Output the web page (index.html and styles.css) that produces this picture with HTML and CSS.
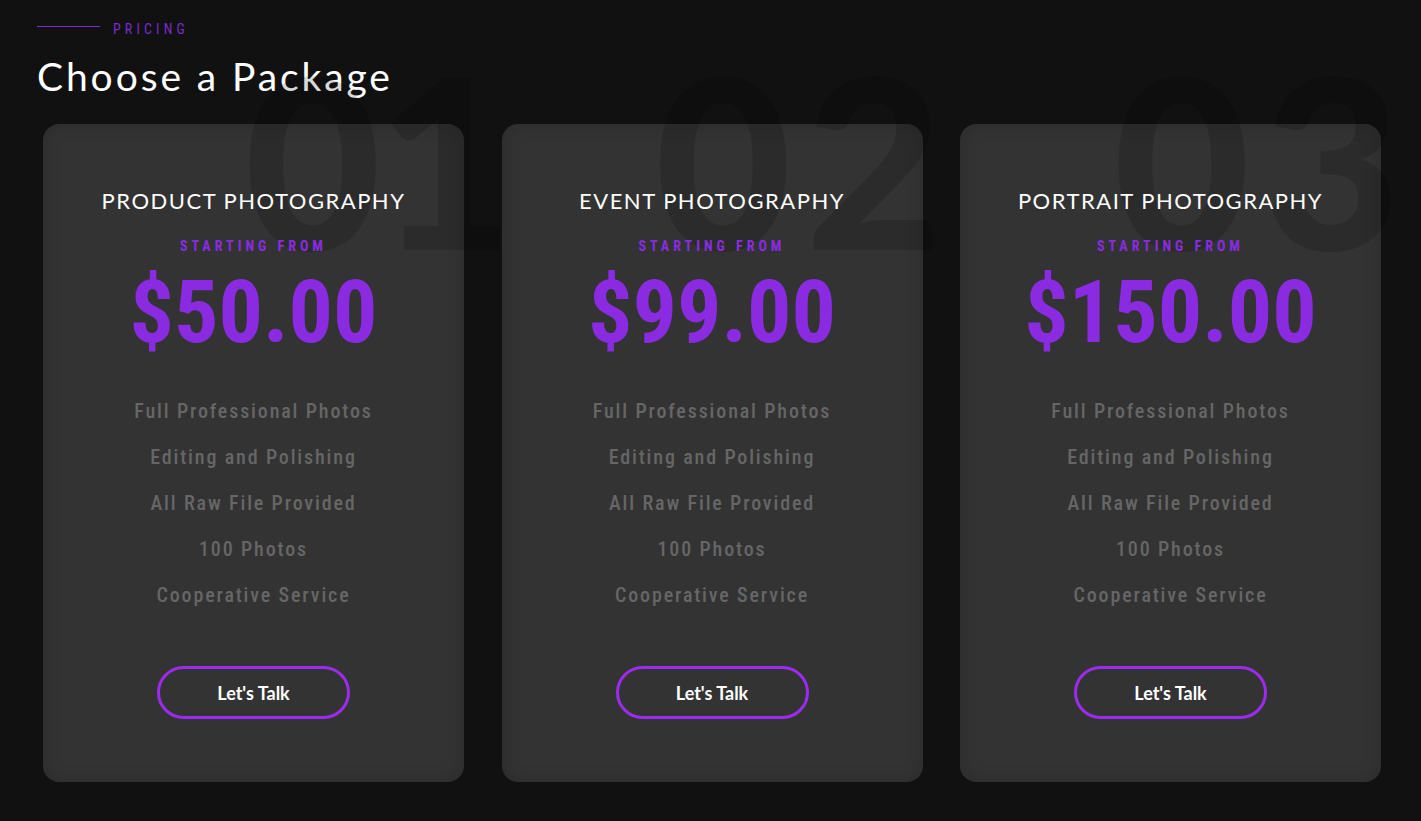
FILE: index.html
```html
<!DOCTYPE html>
<html lang="en">
<head>
<meta charset="utf-8">
<title>Pricing</title>
<link rel="stylesheet" href="styles.css">
</head>
<body>
<section class="pricing">
  <div class="eyebrow">
    <span class="eyebrow-line"></span>
    <span class="eyebrow-text">PRICING</span>
  </div>
  <h2 class="heading">Choose a Package</h2>

  <div class="cards">
    <article class="card">
      <span class="card-num card-num--one">01</span>
      <div class="card-body">
        <h3 class="card-title">PRODUCT PHOTOGRAPHY</h3>
        <p class="card-from">STARTING FROM</p>
        <p class="card-price">$50.00</p>
        <ul class="card-list">
          <li>Full Professional Photos</li>
          <li>Editing and Polishing</li>
          <li>All Raw File Provided</li>
          <li>100 Photos</li>
          <li>Cooperative Service</li>
        </ul>
        <a class="card-btn" href="#">Let's Talk</a>
      </div>
    </article>

    <article class="card">
      <span class="card-num">02</span>
      <div class="card-body">
        <h3 class="card-title">EVENT PHOTOGRAPHY</h3>
        <p class="card-from">STARTING FROM</p>
        <p class="card-price">$99.00</p>
        <ul class="card-list">
          <li>Full Professional Photos</li>
          <li>Editing and Polishing</li>
          <li>All Raw File Provided</li>
          <li>100 Photos</li>
          <li>Cooperative Service</li>
        </ul>
        <a class="card-btn" href="#">Let's Talk</a>
      </div>
    </article>

    <article class="card">
      <span class="card-num">03</span>
      <div class="card-body">
        <h3 class="card-title">PORTRAIT PHOTOGRAPHY</h3>
        <p class="card-from">STARTING FROM</p>
        <p class="card-price">$150.00</p>
        <ul class="card-list">
          <li>Full Professional Photos</li>
          <li>Editing and Polishing</li>
          <li>All Raw File Provided</li>
          <li>100 Photos</li>
          <li>Cooperative Service</li>
        </ul>
        <a class="card-btn" href="#">Let's Talk</a>
      </div>
    </article>
  </div>
</section>
</body>
</html>
```

FILE: styles.css
```css
* { box-sizing: border-box; }

html, body {
  margin: 0;
  padding: 0;
  background: #111111;
  height: 100%;
}

body {
  font-family: "Lato", "Open Sans", sans-serif;
  color: #fff;
  overflow: hidden;
}

.pricing {
  padding: 21px 40px 0 37px;
}

.eyebrow {
  display: flex;
  align-items: flex-start;
  gap: 13px;
  height: 16px;
}

.eyebrow-line {
  margin-top: 5px;
  width: 63px;
  height: 1px;
  background: #7f2bd8;
}

.eyebrow-text {
  font-family: "Roboto Condensed", "Liberation Sans Narrow", "Roboto", sans-serif;
  font-stretch: condensed;
  font-size: 14px;
  line-height: 16px;
  letter-spacing: 4.1px;
  color: #7b2bcf;
}

.heading {
  margin: 15px 0 0 0;
  font-family: "Lato", sans-serif;
  font-weight: 400;
  font-size: 39px;
  line-height: 48px;
  letter-spacing: 2.9px;
  color: #ffffff;
}

.cards {
  margin: 24px 0 0 6px;
  display: grid;
  grid-template-columns: repeat(3, 421px);
  column-gap: 37.5px;
}

.card {
  position: relative;
  height: 658px;
  background: #333333;
  border-radius: 16px;
  box-shadow: inset 0 0 18px rgba(0, 0, 0, 0.16);
}

.card-num {
  position: absolute;
  right: -34px;
  top: -83px;
  z-index: 1;
  font-family: "Lato", sans-serif;
  font-weight: 900;
  font-size: 236px;
  line-height: 1;
  letter-spacing: 14px;
  color: rgba(0, 0, 0, 0.15);
  pointer-events: none;
}

.card-num--one {
  right: -46px;
  letter-spacing: -4px;
}

.card-body {
  position: relative;
  z-index: 2;
  display: flex;
  flex-direction: column;
  align-items: center;
  padding-top: 62px;
  text-align: center;
}

.card-title {
  margin: 0;
  font-family: "Lato", sans-serif;
  font-weight: 400;
  font-size: 22px;
  line-height: 30px;
  letter-spacing: 1.5px;
  color: #ffffff;
}

.card-from {
  margin: 21px 0 0 0;
  font-family: "Roboto Condensed", "Liberation Sans Narrow", "Roboto", sans-serif;
  font-stretch: condensed;
  font-weight: 700;
  font-size: 14px;
  line-height: 18px;
  letter-spacing: 4px;
  color: #8a2be2;
}

.card-price {
  margin: 7px 0 0 0;
  font-family: "Roboto Condensed", "Liberation Sans Narrow", "Roboto", sans-serif;
  font-stretch: condensed;
  font-weight: 700;
  font-size: 88px;
  line-height: 100px;
  color: #8a2be2;
}

.card-list {
  list-style: none;
  margin: 26px 0 0 0;
  padding: 0;
}

.card-list li {
  font-family: "Roboto Condensed", "Liberation Sans Narrow", "Roboto", sans-serif;
  font-stretch: condensed;
  font-weight: 500;
  font-size: 20px;
  line-height: 46px;
  letter-spacing: 1.85px;
  color: #666666;
}

.card-btn {
  margin-top: 48px;
  display: flex;
  align-items: center;
  justify-content: center;
  width: 193px;
  height: 53px;
  border: 3px solid #9d2bef;
  border-radius: 27px;
  font-family: "Lato", sans-serif;
  font-weight: 700;
  font-size: 18px;
  color: #ffffff;
  text-decoration: none;
}
```
